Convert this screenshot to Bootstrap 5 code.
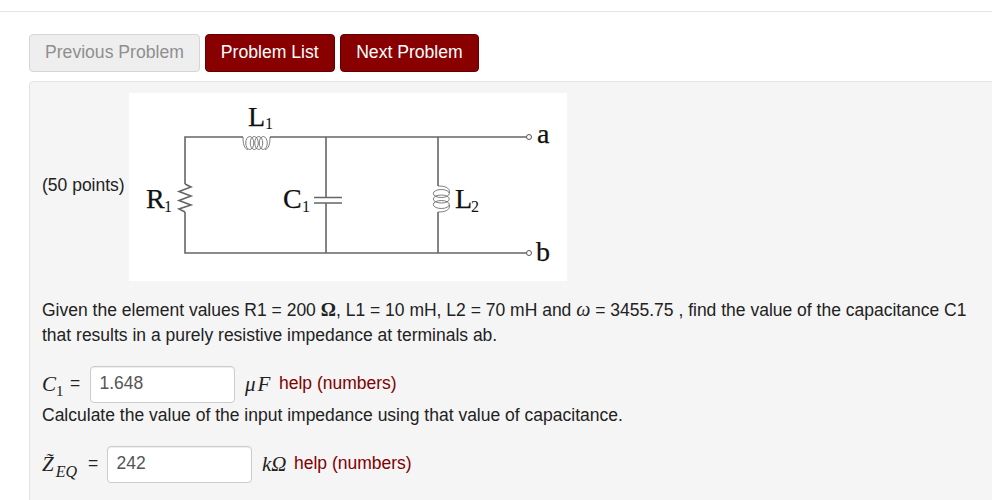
<!DOCTYPE html>
<html lang="en">
<head>
<meta charset="utf-8">
<title>Problem</title>
<link rel="stylesheet" href="https://cdn.jsdelivr.net/npm/bootstrap@5.3.0/dist/css/bootstrap.min.css">
<style>
html,body{overflow:hidden;height:500px}
body{background:#fff;font-family:"Liberation Sans",Arial,sans-serif;font-size:17.5px;color:#222;line-height:25px}
.top-rule{margin:11px 0 22px;border:0;border-top:1px solid #e5e5e5;opacity:1;height:0}
.page-wrap{padding-left:29px;margin-right:-12px}
.btn-row{gap:5px}
.nav-btn{height:38px;padding:0 15px 2px;font-size:17.6px;line-height:34px;border-radius:4px;border:1px solid #600;background:#880000;color:#fff}
.nav-btn.pad-wide{padding-left:15.5px;padding-right:15.5px}
.nav-btn.btn:disabled{background:#eee;border-color:#d5d5d5;color:#8f8f8f;opacity:1}
.prob-panel{margin-top:9px;background:#f5f5f5;border:1px solid #e3e3e3;border-radius:4px 4px 0 0;padding:11px 12px 0;height:430px}
.circuit{display:block;width:438px;height:188px;background:#fff;flex:none}
.circuit text{font-family:"Liberation Serif",serif;fill:#111;stroke:#111;stroke-width:.25}
.circuit .lbl{font-size:28px}
.circuit .sub{font-size:16px;stroke:none}
.wire{stroke:#666;stroke-width:1.6;fill:none}
.coil{stroke:#666;stroke-width:.85;fill:none}
.pts{margin-right:4px;margin-top:80px}
.prob-text{margin-top:17px}
.math{font-family:"Liberation Serif",serif;font-size:21px;line-height:25px}
.math sub{font-size:15px;font-style:normal;bottom:-.3em}
.math sub.sub-it{font-style:italic;font-size:16px;bottom:-.4em;margin-left:2px}
.w-op{font-family:"Liberation Serif",serif;font-size:20px;font-style:italic;line-height:1}
.om{font-family:"Liberation Serif",serif;font-size:19px;font-weight:bold;line-height:1}
.unit-wide{letter-spacing:2px}
.ans-box.form-control{width:145px;height:37px;padding:0 8.5px 2px;font-size:17.5px;color:#555;border-color:#ccc;border-radius:4px;display:inline-block;background:#fff;box-shadow:inset 0 1px 1px rgba(0,0,0,.075);flex:none}
.ans-row{height:37px}
.help-link{color:#800000;text-decoration:none;padding-bottom:2px}
.first-row{margin-top:18px}
.second-row{margin-top:18px}
.lhs-a{width:28px}
.lhs-b{width:46px}
.eq-a{width:20px;padding-bottom:2px}
.eq-b{width:19px;padding-bottom:2px}
.unit-a{margin-left:10px;width:34px}
.unit-b{margin-left:10px;width:32px}
</style>
</head>
<body>
<hr class="top-rule">
<div class="page-wrap">
  <div class="d-flex btn-row">
    <button class="btn nav-btn" disabled>Previous Problem</button>
    <button class="btn nav-btn">Problem List</button>
    <button class="btn nav-btn pad-wide">Next Problem</button>
  </div>
  <div class="prob-panel">
    <div class="d-flex">
      <div class="pts">(50 points)</div>
      <svg class="circuit" viewBox="0 0 438 188" xmlns="http://www.w3.org/2000/svg">
        <path class="wire" d="M56 91V44H114M141 44H397.500M56 119V160H397.500M197 44V104.500M197 110V160M309 44V93M309 119V160M185 104.500H213M185 110H213"/>
        <path class="wire" d="M56 91L62 94L50 98.500L62 103L50 107.500L62 112L50 116L56 119"/>
        <path class="coil" d="M114 44C114 50 115 56 119 56.500M141 44C141 50 140 56 136 56.500"/>
        <ellipse class="coil" cx="120.750" cy="50" rx="4" ry="6.500"/>
        <ellipse class="coil" cx="125.250" cy="50" rx="4" ry="6.500"/>
        <ellipse class="coil" cx="129.750" cy="50" rx="4" ry="6.500"/>
        <ellipse class="coil" cx="134.250" cy="50" rx="4" ry="6.500"/>
        <path class="coil" d="M309 93C315 93 321 94 320.500 100M309 119C315 119 321 118 320.500 112"/>
        <ellipse class="coil" cx="312.300" cy="100.500" rx="8" ry="4"/>
        <ellipse class="coil" cx="312.300" cy="106" rx="8" ry="4"/>
        <ellipse class="coil" cx="312.300" cy="111.500" rx="8" ry="4"/>
        <circle cx="400" cy="44" r="2.500" fill="#fff" stroke="#555"/>
        <circle cx="400" cy="160" r="2.500" fill="#fff" stroke="#555"/>
        <text class="lbl" x="119" y="33">L</text><text class="sub" x="136" y="36">1</text>
        <text class="lbl" x="17" y="115">R</text><text class="sub" x="35" y="119">1</text>
        <text class="lbl" x="154" y="115">C</text><text class="sub" x="173" y="119">1</text>
        <text class="lbl" x="326" y="115">L</text><text class="sub" x="342" y="119">2</text>
        <text class="lbl" x="408" y="50">a</text>
        <text class="lbl" x="407" y="168">b</text>
      </svg>
    </div>
    <div class="prob-text">
      <div><span>Given the element values R1 = 200 </span><span class="om">Ω</span><span>, L1 = 10 mH, L2 = 70 mH and </span><span class="w-op">ω</span><span> = 3455.75 , find the value of the capacitance C1</span></div>
      <div>that results in a purely resistive impedance at terminals ab.</div>
    </div>
    <div class="d-flex align-items-center ans-row first-row">
      <span class="math fst-italic lhs-a">C<sub>1</sub></span><span class="eq-a">=</span>
      <input class="form-control ans-box" value="1.648" aria-label="C1">
      <span class="math fst-italic unit-wide unit-a">μF</span><a class="help-link" href="#">help (numbers)</a>
    </div>
    <div>Calculate the value of the input impedance using that value of capacitance.</div>
    <div class="d-flex align-items-center ans-row second-row">
      <span class="math fst-italic lhs-b">Z̃<sub class="sub-it">EQ</sub></span><span class="eq-b">=</span>
      <input class="form-control ans-box" value="242" aria-label="ZEQ">
      <span class="math fst-italic unit-b">kΩ</span><a class="help-link" href="#">help (numbers)</a>
    </div>
  </div>
</div>
<script src="https://cdn.jsdelivr.net/npm/bootstrap@5.3.0/dist/js/bootstrap.bundle.min.js"></script>
</body>
</html>
